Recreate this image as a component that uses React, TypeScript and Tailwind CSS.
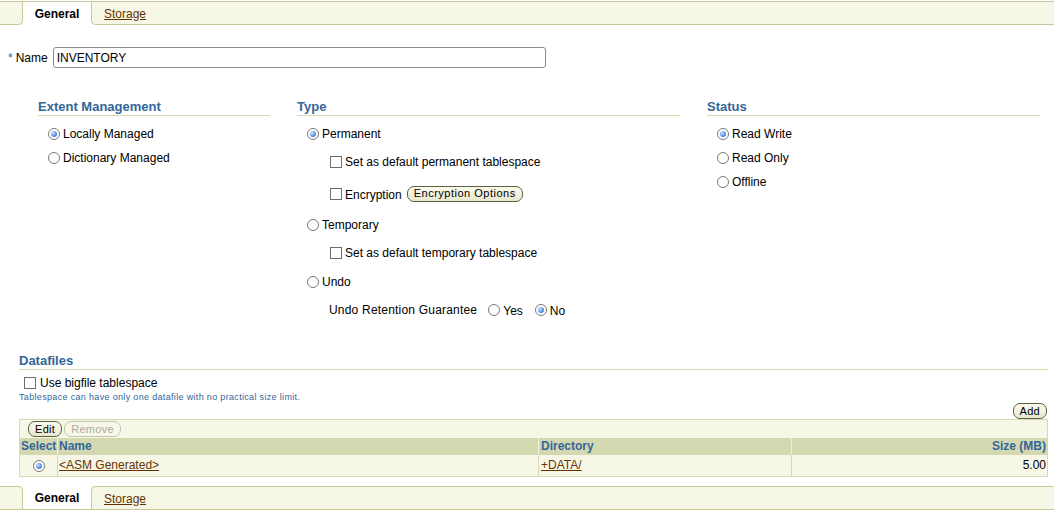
import React from "react";

const FONT = { fontFamily: '"Liberation Sans", Arial, sans-serif' };

function Radio({ checked = false }: { checked?: boolean }) {
  return (
    <span className="relative inline-flex h-[12px] w-[12px] shrink-0 items-center justify-center rounded-full border border-[#7a7a7a] bg-white">
      {checked && (
        <span className="h-[6px] w-[6px] rounded-full bg-[radial-gradient(circle_at_35%_35%,#cfe3ff,#3d7fd6_70%)]" />
      )}
    </span>
  );
}

function Checkbox() {
  return <span className="inline-block h-[12px] w-[12px] shrink-0 border border-[#6e6e6e] bg-white" />;
}

function Pill({ children, disabled = false, wide = false }: { children: React.ReactNode; disabled?: boolean; wide?: boolean }) {
  return (
    <span
      className={
        "inline-flex h-[16px] items-center rounded-[7px] border px-[6px] text-[11px] leading-none " +
        (wide ? "tracking-[0.5px] " : "tracking-[0.3px] ") +
        (disabled
          ? "border-[#c4c4ad] bg-[#f7f7e7] text-[#a9a9a0]"
          : "border-[#5e5e42] bg-[linear-gradient(#fbfbee,#e8e8cf)] text-black")
      }
    >
      {children}
    </span>
  );
}

function SectionHead({ children }: { children: React.ReactNode }) {
  return (
    <div className="border-b border-[#d6d9ac] pb-[1px] text-[13px] font-bold leading-[15px] text-[#336699]">
      {children}
    </div>
  );
}

function Tabs({ bottom = false }: { bottom?: boolean }) {
  const edge = bottom ? "border-t" : "border-b";
  return (
    <div
      className={
        "flex h-[24px] border-[#c7c79a] bg-[#f7f7e7] text-[12px] " +
        (bottom ? "border-b" : "mt-[1px] border-t")
      }
    >
      <div
        className={
          "w-[23px] border-r border-[#c7c79a] " +
          edge +
          (bottom ? " rounded-tr-[5px]" : " rounded-br-[5px]")
        }
      />
      <div className="flex w-[68px] items-center justify-center bg-white pt-[1px] font-bold">General</div>
      <div
        className={
          "flex flex-1 items-center border-l border-[#c7c79a] pl-[12px] pt-[1px] " +
          edge +
          (bottom ? " rounded-tl-[5px]" : " rounded-bl-[5px]")
        }
      >
        <span className="text-[#663300] underline">Storage</span>
      </div>
    </div>
  );
}

export default function App() {
  return (
    <div className="h-[511px] w-[1054px] overflow-hidden bg-white text-[12px] text-black" style={FONT}>
      <Tabs />

      {/* name */}
      <div className="mt-[22px] flex items-center pl-[8px]">
        <span className="text-[#336699]">*</span>
        <span className="ml-[3px]">Name</span>
        <div className="ml-[5px] flex h-[21px] w-[493px] items-center rounded-[3px] border border-[#8a8a8a] pl-[3px]">
          INVENTORY
        </div>
      </div>

      {/* three columns */}
      <div className="mt-[31px] grid grid-cols-[232px_383px_333px] gap-x-[27px] pl-[38px]">
        <div>
          <SectionHead>Extent Management</SectionHead>
          <div className="pt-[6px] pl-[10px]">
            <div className="flex h-[24px] items-center gap-[3px]"><Radio checked />Locally Managed</div>
            <div className="flex h-[24px] items-center gap-[3px]"><Radio />Dictionary Managed</div>
          </div>
        </div>

        <div>
          <SectionHead>Type</SectionHead>
          <div className="pt-[6px] pl-[10px]">
            <div className="flex h-[24px] items-center gap-[3px]"><Radio checked />Permanent</div>
            <div className="flex h-[32px] items-center gap-[3px] pl-[23px]"><Checkbox />Set as default permanent tablespace</div>
            <div className="flex h-[32px] items-center gap-[3px] pl-[23px]">
              <Checkbox />
              <span className="mt-[2px]">Encryption</span>
              <span className="ml-[2px] -mt-[2px]"><Pill wide>Encryption Options</Pill></span>
            </div>
            <div className="flex h-[30px] items-center gap-[3px]"><Radio />Temporary</div>
            <div className="flex h-[26px] items-center gap-[3px] pl-[23px]"><Checkbox />Set as default temporary tablespace</div>
            <div className="flex h-[32px] items-center gap-[3px]"><Radio />Undo</div>
            <div className="flex h-[24px] items-center pl-[22px]">
              <span className="tracking-[0.2px]">Undo Retention Guarantee</span>
              <span className="ml-[11px] flex items-center gap-[3px]"><Radio /><span className="mt-[2px]">Yes</span></span>
              <span className="ml-[12px] flex items-center gap-[3px]"><Radio checked /><span className="mt-[2px]">No</span></span>
            </div>
          </div>
        </div>

        <div>
          <SectionHead>Status</SectionHead>
          <div className="pt-[6px] pl-[10px]">
            <div className="flex h-[24px] items-center gap-[3px]"><Radio checked />Read Write</div>
            <div className="flex h-[24px] items-center gap-[3px]"><Radio />Read Only</div>
            <div className="flex h-[24px] items-center gap-[3px]"><Radio />Offline</div>
          </div>
        </div>
      </div>

      {/* datafiles */}
      <div className="mt-[31px] ml-[19px] w-[1029px]">
        <SectionHead>Datafiles</SectionHead>
        <div className="mt-[4px] flex items-center gap-[4px] pl-[5px] text-[12px]"><Checkbox />Use bigfile tablespace</div>
        <div className="text-[9px] leading-[10px] tracking-[0.33px] text-[#336699]">
          Tablespace can have only one datafile with no practical size limit.
        </div>
        <div className="mt-[1px] flex justify-end pr-[1px]">
          <Pill>Add</Pill>
        </div>

        <div className="border border-[#d6d9b4]">
          <div className="flex h-[18px] items-center gap-[2px] bg-[#f7f7e7] pl-[8px]">
            <Pill>Edit</Pill>
            <Pill disabled>Remove</Pill>
          </div>
          <div className="grid h-[17px] grid-cols-[37px_481px_253px_1fr] bg-[#d3d8b1] font-bold leading-[17px] text-[#336699]">
            <div className="pl-[1px]">Select</div>
            <div className="border-l border-[#eef0dc] pl-[1px]">Name</div>
            <div className="border-l border-[#eef0dc] pl-[2px]">Directory</div>
            <div className="border-l border-[#eef0dc] pr-[1px] text-right">Size (MB)</div>
          </div>
          <div className="grid h-[21px] grid-cols-[37px_481px_253px_1fr] bg-[#f7f7e7] leading-[21px]">
            <div className="flex items-center justify-center"><Radio checked /></div>
            <div className="border-l border-[#d6d9b4] pl-[1px]"><span className="text-[#663300] underline">&lt;ASM Generated&gt;</span></div>
            <div className="border-l border-[#d6d9b4] pl-[2px]"><span className="text-[#663300] underline">+DATA/</span></div>
            <div className="border-l border-[#d6d9b4] pr-[1px] text-right">5.00</div>
          </div>
        </div>
      </div>

      <div className="mt-[9px]">
        <Tabs bottom />
      </div>
    </div>
  );
}
